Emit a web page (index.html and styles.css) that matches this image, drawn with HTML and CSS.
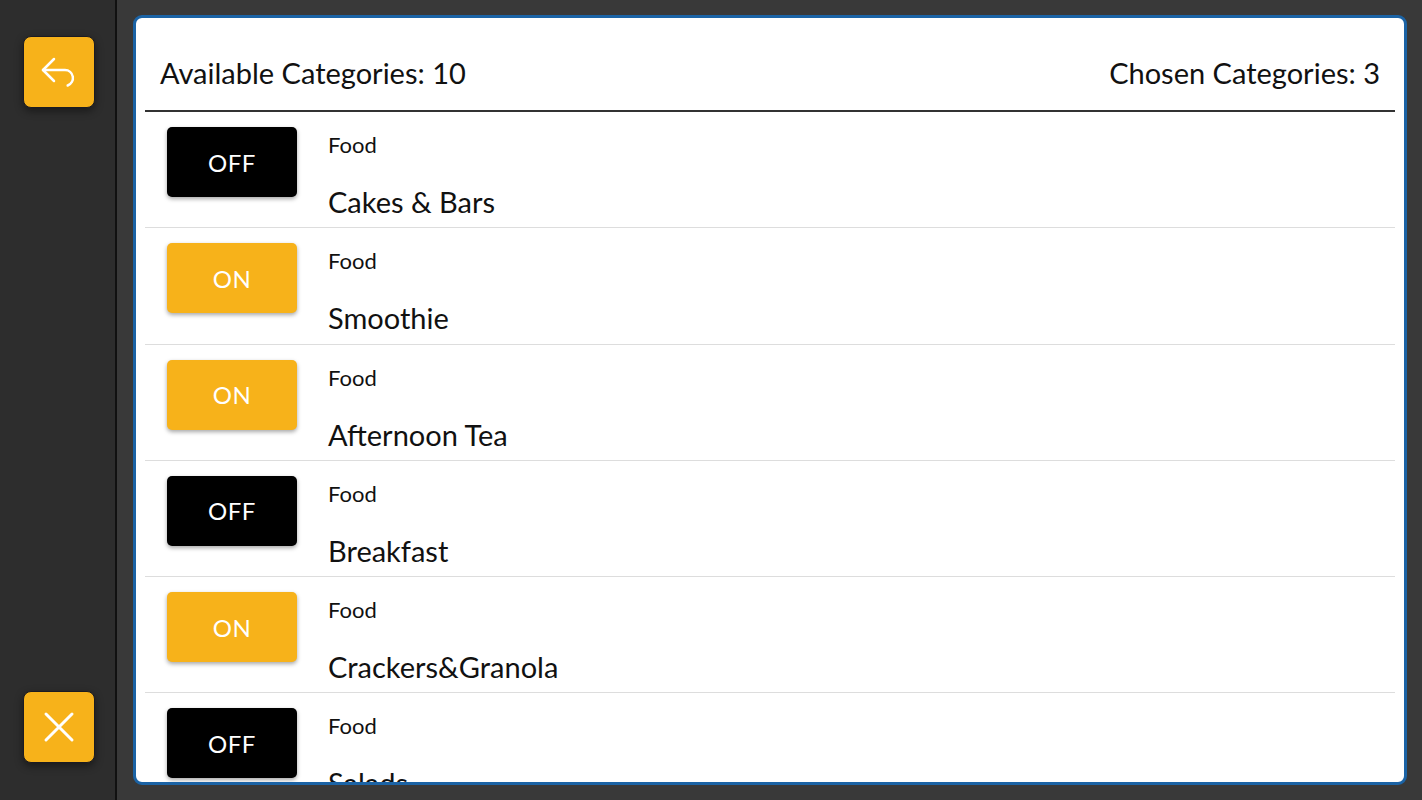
FILE: index.html
```html
<!DOCTYPE html>
<html>
<head>
<meta charset="utf-8">
<link rel="stylesheet" href="styles.css">
</head>
<body>
<div class="app">
  <aside class="sidebar">
    <button class="side-btn" aria-label="Back">
      <svg width="40" height="40" viewBox="0 0 40 40" fill="none" stroke="#fff" stroke-width="2.5" stroke-linecap="round" stroke-linejoin="round"><path d="M15 7 4 18l11 11"/><path d="M4 18h22a8 8 0 0 1 2.7 15.5"/></svg>
    </button>
    <button class="side-btn close" aria-label="Close">
      <svg width="40" height="40" viewBox="0 0 40 40" fill="none" stroke="#fff" stroke-width="3" stroke-linecap="round"><path d="M7 7 33 33M33 7 7 33"/></svg>
    </button>
  </aside>
  <main class="main">
    <section class="panel">
      <header class="panel-head">
        <span>Available Categories: 10</span>
        <span>Chosen Categories: 3</span>
      </header>
      <div class="list">
        <div class="row"><div class="toggle off">OFF</div><div class="info"><div class="type">Food</div><div class="name">Cakes &amp; Bars</div></div></div>
        <div class="row"><div class="toggle on">ON</div><div class="info"><div class="type">Food</div><div class="name">Smoothie</div></div></div>
        <div class="row"><div class="toggle on">ON</div><div class="info"><div class="type">Food</div><div class="name">Afternoon Tea</div></div></div>
        <div class="row"><div class="toggle off">OFF</div><div class="info"><div class="type">Food</div><div class="name">Breakfast</div></div></div>
        <div class="row"><div class="toggle on">ON</div><div class="info"><div class="type">Food</div><div class="name">Crackers&amp;Granola</div></div></div>
        <div class="row"><div class="toggle off">OFF</div><div class="info"><div class="type">Food</div><div class="name">Salads</div></div></div>
      </div>
    </section>
  </main>
</div>
</body>
</html>
```
FILE: styles.css
```css
* { box-sizing: border-box; }
html, body { margin: 0; padding: 0; }
body {
  width: 1422px;
  height: 800px;
  overflow: hidden;
  font-family: "Lato", "Noto Sans", sans-serif;
  background: #393939;
}
.app {
  display: flex;
  height: 800px;
}
.sidebar {
  width: 117px;
  flex: none;
  background: #2d2d2d;
  border-right: 2px solid #111;
  display: flex;
  flex-direction: column;
  justify-content: space-between;
  padding: 36px 0 37px 23px;
}
.side-btn {
  width: 72px;
  height: 72px;
  background: #f7b21a;
  border: 1px solid #1b1b22;
  border-radius: 8px;
  display: flex;
  align-items: center;
  justify-content: center;
  padding: 0;
  box-shadow: 0 3px 8px rgba(0,0,0,0.45);
}
.side-btn svg { flex: none; }
.main {
  flex: 1;
  padding: 15px 15px 15px 16px;
  display: flex;
}
.panel {
  flex: 1;
  background: #fff;
  border: 3px solid #1b63a5;
  border-radius: 9px;
  overflow: hidden;
  display: flex;
  flex-direction: column;
  padding: 0 9px;
}
.panel-head {
  display: flex;
  justify-content: space-between;
  align-items: flex-end;
  height: 94px;
  padding: 0 15px 20px 15px;
  border-bottom: 2px solid #333;
  font-size: 29px;
  color: #111;
  line-height: 35px;
  flex: none;
}
.list {
  flex: 1;
  overflow: hidden;
}
.row {
  height: 116.25px;
  border-bottom: 1px solid #ddd;
  display: flex;
  align-items: flex-start;
  padding: 15px 0 0 22px;
}
.toggle {
  width: 130px;
  height: 70px;
  flex: none;
  border-radius: 5px;
  display: flex;
  align-items: center;
  justify-content: center;
  color: #fff;
  font-size: 24px;
  letter-spacing: 0.5px;
  box-shadow: 0 2px 4px rgba(0,0,0,0.35);
}
.toggle.off { background: #000; }
.toggle.on { background: #f7b21a; }
.info {
  margin-left: 31px;
  padding-top: 5px;
  color: #111;
}
.type {
  font-size: 22px;
  line-height: 26px;
}
.name {
  font-size: 29px;
  line-height: 35px;
  margin-top: 26px;
}
```
